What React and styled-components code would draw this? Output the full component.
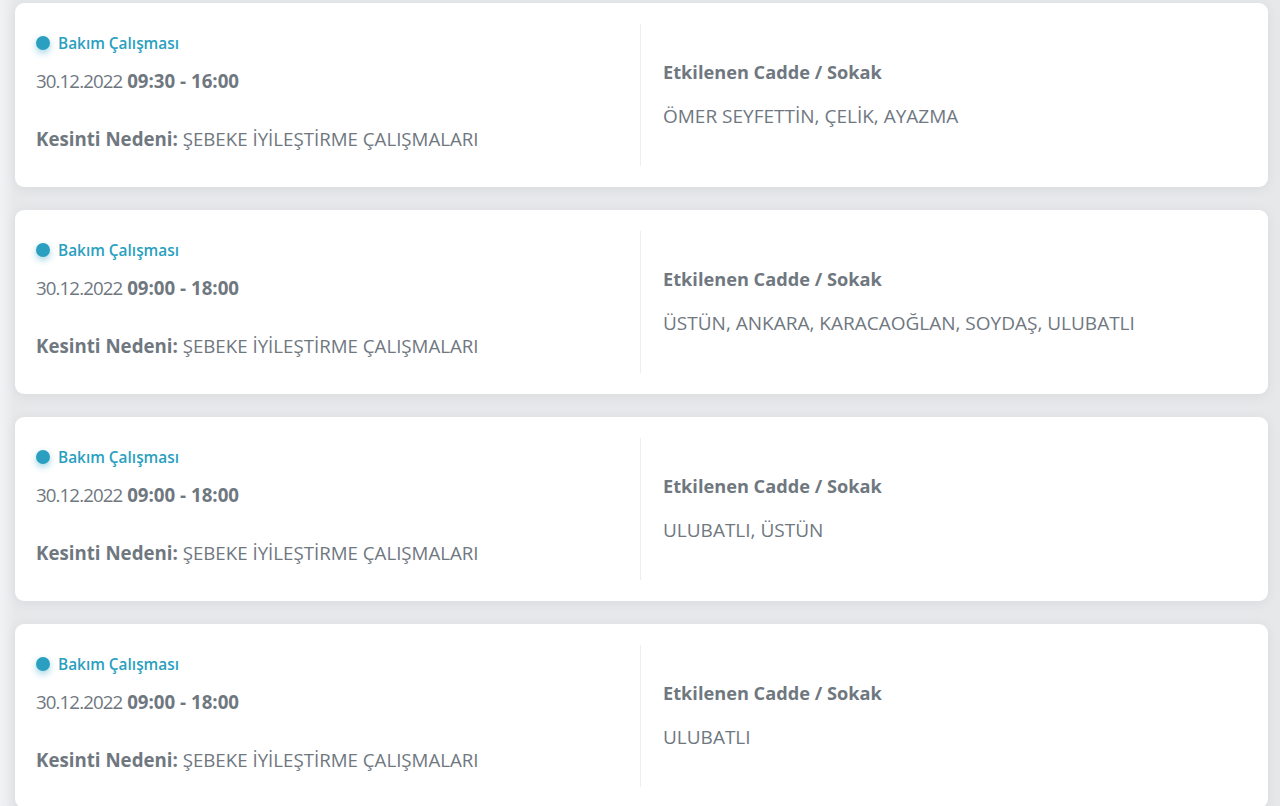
import styled, { createGlobalStyle } from "styled-components";

const GlobalStyle = createGlobalStyle`
    html, body {
        margin: 0;
        padding: 0;
        background-color: #e9ebed;
        font-family: "Open Sans", "Noto Sans", sans-serif;
    }
`;

const outages = [
    { time: "09:30 - 16:00", streets: "ÖMER SEYFETTİN, ÇELİK, AYAZMA" },
    { time: "09:00 - 18:00", streets: "ÜSTÜN, ANKARA, KARACAOĞLAN, SOYDAŞ, ULUBATLI" },
    { time: "09:00 - 18:00", streets: "ULUBATLI, ÜSTÜN" },
    { time: "09:00 - 18:00", streets: "ULUBATLI" },
];

// liste
const List = styled.div`
    display: flex;
    flex-direction: column;
    gap: 23px;
    padding: 3px 12px 20px 15px;
    height: 806px;
    box-sizing: border-box;
    overflow: hidden;
    background: linear-gradient(to right, #f0f2f4 0, #e6e8ea 15px, #e6e8ea 100%);
`;

const Card = styled.div`
    display: grid;
    grid-template-columns: 604px 1fr;
    flex-shrink: 0;
    height: 184px;
    box-sizing: border-box;
    padding: 21px 21px;
    background-color: #fff;
    border-radius: 9px;
    box-shadow: 0 2px 12px rgba(60, 70, 80, 0.08);
`;

const LeftCol = styled.div`
    display: flex;
    flex-direction: column;
`;

const RightCol = styled.div`
    display: flex;
    flex-direction: column;
    justify-content: center;
    gap: 22px;
    border-left: 1px solid #eceef0;
    padding: 0 0 3px 22px;
`;

const Status = styled.div`
    display: flex;
    align-items: center;
    gap: 8px;
    margin-top: 10px;
    height: 18px;
    font-size: 15.4px;
    font-weight: 600;
    color: #2a9fc0;
`;

const Dot = styled.span`
    width: 14px;
    height: 14px;
    border-radius: 50%;
    background-color: #2a9fc0;
    box-shadow: 0 3px 7px rgba(42, 159, 192, 0.45);
`;

const Line = styled.div`
    font-size: 18.7px;
    line-height: 22px;
    color: #6f777f;
    margin-top: ${({ $gap }) => $gap}px;

    strong {
        font-weight: 700;
    }
`;

const DateText = styled.span`
    letter-spacing: -0.9px;
`;

const Heading = styled.div`
    font-size: 18.2px;
    line-height: 22px;
    font-weight: 700;
    color: #6f777f;
`;

const Streets = styled.div`
    font-size: 19px;
    line-height: 22px;
    color: #6f777f;
`;

const App = () => (
    <>
        <GlobalStyle />
        <List>
            {outages.map((o, i) => (
                <Card key={i}>
                    <LeftCol>
                        <Status>
                            <Dot />
                            Bakım Çalışması
                        </Status>
                        <Line $gap={18}>
                            <DateText>30.12.2022</DateText> <strong>{o.time}</strong>
                        </Line>
                        <Line $gap={36}>
                            <strong>Kesinti Nedeni:</strong> ŞEBEKE İYİLEŞTİRME ÇALIŞMALARI
                        </Line>
                    </LeftCol>
                    <RightCol>
                        <Heading>Etkilenen Cadde / Sokak</Heading>
                        <Streets>{o.streets}</Streets>
                    </RightCol>
                </Card>
            ))}
        </List>
    </>
);

export default App;
